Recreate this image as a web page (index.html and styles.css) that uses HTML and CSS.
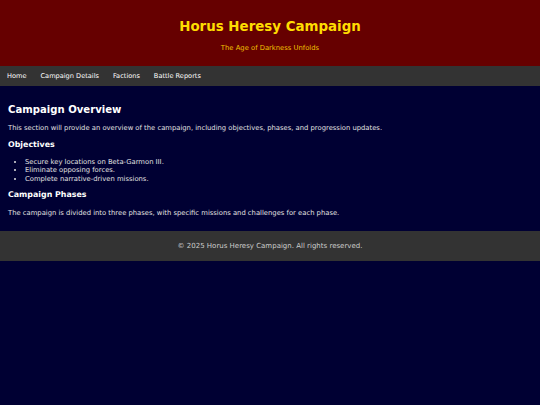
FILE: index.html
```html
<!DOCTYPE html>
<html>
<head>
<meta charset="utf-8">
<title>Horus Heresy Campaign</title>
<link rel="stylesheet" href="styles.css">
</head>
<body>
<header class="site-header">
  <h1 class="title">Horus Heresy Campaign</h1>
  <p class="subtitle">The Age of Darkness Unfolds</p>
</header>
<nav class="site-nav">
  <a href="#">Home</a>
  <a href="#">Campaign Details</a>
  <a href="#">Factions</a>
  <a href="#">Battle Reports</a>
</nav>
<main class="content">
  <h2 class="section-title">Campaign Overview</h2>
  <p class="text">This section will provide an overview of the campaign, including objectives, phases, and progression updates.</p>
  <h3 class="sub-title">Objectives</h3>
  <ul class="list">
    <li>Secure key locations on Beta-Garmon III.</li>
    <li>Eliminate opposing forces.</li>
    <li>Complete narrative-driven missions.</li>
  </ul>
  <h3 class="sub-title">Campaign Phases</h3>
  <p class="text">The campaign is divided into three phases, with specific missions and challenges for each phase.</p>
</main>
<footer class="site-footer">
  <p>&copy; 2025 Horus Heresy Campaign. All rights reserved.</p>
</footer>
</body>
</html>
```
FILE: styles.css
```css
html, body {
  margin: 0;
  padding: 0;
  background: #000033;
}
body {
  font-family: "DejaVu Sans", Verdana, sans-serif;
  font-size: 6.8px;
  color: #e0e0e0;
  min-height: 405px;
}
.site-header {
  background: #660000;
  text-align: center;
  padding: 10px 10px;
  height: 46px;
}
.title {
  margin: 8px 0 0;
  font-size: 13.4px;
  line-height: 17px;
  color: #ffdd00;
}
.subtitle {
  margin: 8px 0 0;
  font-size: 6.8px;
  line-height: 10px;
  color: #f0c000;
}
.site-nav {
  background: #333333;
  display: flex;
  height: 20px;
  align-items: center;
}
.site-nav a {
  color: #ffffff;
  text-decoration: none;
  padding: 0 7px;
  font-size: 6.6px;
}
.content {
  padding: 10px 8px 7px;
}
.section-title {
  margin: 7px 0 6px;
  font-size: 10.1px;
  line-height: 14px;
  color: #ffffff;
}
.text {
  margin: 0 0 6px;
  line-height: 10px;
}
.sub-title {
  margin: 0 0 7.5px;
  font-size: 7.9px;
  line-height: 11px;
  color: #ffffff;
}
.list {
  margin: 0 0 6px;
  padding-left: 17px;
  line-height: 8.5px;
}
.site-footer {
  background: #333333;
  color: #cccccc;
  text-align: center;
  height: 30px;
  display: flex;
  align-items: center;
  justify-content: center;
}
.site-footer p {
  margin: 0;
  font-size: 7px;
}
```
